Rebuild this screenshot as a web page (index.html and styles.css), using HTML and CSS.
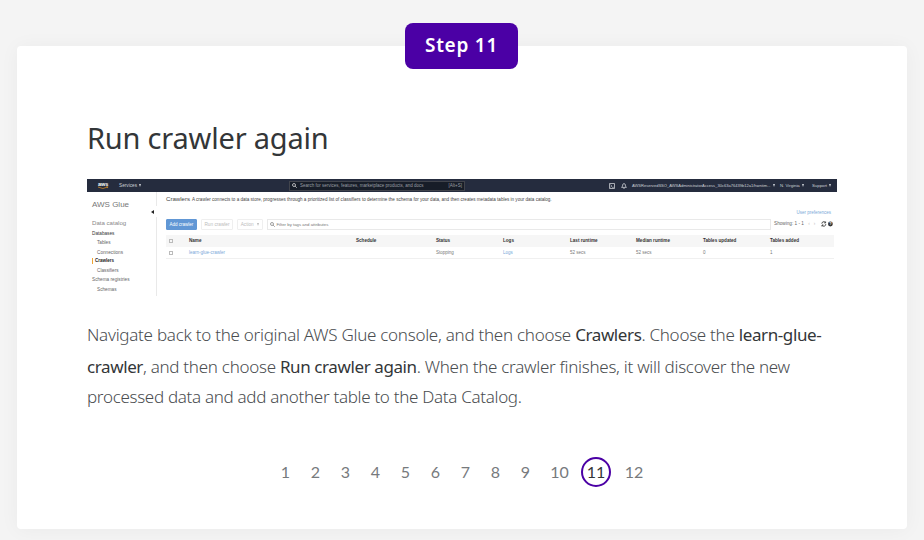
FILE: index.html
```html
<!DOCTYPE html>
<html lang="en">
<head>
<meta charset="utf-8">
<title>Run crawler again</title>
<link rel="stylesheet" href="styles.css">
</head>
<body>
<main class="card">
  <div class="badge">Step 11</div>
  <h1>Run crawler again</h1>
  <section class="console">
    <header class="topbar">
      <svg class="aws" viewBox="0 0 12 9"><text x="1" y="4.8">aws</text><path d="M1 6Q6 9 10.5 6M9.2 5.8h1.6l-.4 1.3"/></svg>
      <span class="services">Services <i class="caret"></i></span>
      <div class="global-search">
        <svg class="lens" viewBox="0 0 10 10"><circle cx="4" cy="4" r="3"/><path d="M6.2 6.2L9.5 9.5"/></svg>
        <span>Search for services, features, marketplace products, and docs</span>
        <span class="key">[Alt+S]</span>
      </div>
      <svg class="shell" viewBox="0 0 6 6"><path d="M.5.5h5v5h-5zM1.5 1.8L2.8 3 1.5 4.2M3.2 4.3h1.5"/></svg>
      <svg class="bell" viewBox="0 0 6 6"><path d="M.6 4.4h4.8L4.4 3V2Q4.2.6 3 .6T1.6 2v1zM2.3 5.3h1.4"/></svg>
      <span class="account">AWSReservedSSO_AWSAdministratorAccess_30c63a76439b12a1/hwntim... <i class="caret"></i></span>
      <span class="region">N. Virginia <i class="caret"></i></span>
      <span class="support">Support <i class="caret"></i></span>
    </header>
    <div class="console-body">
      <nav class="side">
        <div class="product">AWS Glue</div>
        <div class="group">Data catalog</div>
        <div class="item dark">Databases</div>
        <div class="item sub">Tables</div>
        <div class="item sub">Connections</div>
        <div class="item active">Crawlers</div>
        <div class="item sub">Classifiers</div>
        <div class="item">Schema registries</div>
        <div class="item sub">Schemas</div>
        <span class="collapse"></span>
      </nav>
      <div class="main">
        <div class="intro"><span class="title">Crawlers</span><span class="desc">A crawler connects to a data store, progresses through a prioritized list of classifiers to determine the schema for your data, and then creates metadata tables in your data catalog.</span></div>
        <div class="prefs">User preferences</div>
        <div class="tools">
          <span class="btn primary">Add crawler</span>
          <span class="btn run">Run crawler</span>
          <span class="btn action">Action &nbsp;<i class="caret"></i></span>
          <div class="filter"><svg class="lens" viewBox="0 0 10 10"><circle cx="4" cy="4" r="3"/><path d="M6.2 6.2L9.5 9.5"/></svg><span>Filter by tags and attributes</span></div>
          <span class="showing">Showing: 1 - 1 <i>‹ &nbsp; ›</i></span>
          <svg class="icons" viewBox="0 0 12 6"><path d="M.8 2.6A2 2 0 0 1 4.3 1.4M4.6.5v1.4H3.2M4.8 3.2A2 2 0 0 1 1.3 4.5M1 5.5V4h1.4"/><circle cx="9.4" cy="3" r="2.4"/><text x="8.3" y="4.4">?</text></svg>
        </div>
        <div class="row head"><span><i class="check"></i></span><span>Name</span><span>Schedule</span><span>Status</span><span>Logs</span><span>Last runtime</span><span>Median runtime</span><span>Tables updated</span><span>Tables added</span></div>
        <div class="row"><span><i class="check"></i></span><span class="link">learn-glue-crawler</span><span></span><span>Stopping</span><span class="link">Logs</span><span>52 secs</span><span>52 secs</span><span>0</span><span>1</span></div>
      </div>
    </div>
  </section>
  <p class="copy">
    <span class="line l1">Navigate back to the original AWS Glue console, and then choose <b>Crawlers</b>. Choose the <b>learn-glue-</b></span>
    <span class="line l2"><b>crawler</b>, and then choose <b>Run crawler again</b>. When the crawler finishes, it will discover the new</span>
    <span class="line l3">processed data and add another table to the Data Catalog.</span>
  </p>
  <nav class="pages"><a>1</a><a>2</a><a>3</a><a>4</a><a>5</a><a>6</a><a>7</a><a>8</a><a>9</a><a class="wide">10</a><a class="wide current">11</a><a class="wide">12</a></nav>
</main>
</body>
</html>
```
FILE: styles.css
```css
* { box-sizing: border-box; }
body { margin: 0; padding: 46px 0 0 17px; height: 540px; overflow: hidden; background: #f4f4f4; font-family: "Noto Sans", sans-serif; color: #333638; }
.card { position: relative; width: 890px; height: 483px; padding: 71px 70px 0; background: #fff; border-radius: 4px; box-shadow: 0 1px 20px rgba(0,0,0,.045); }
.badge { position: absolute; left: 388px; top: -23px; width: 113px; height: 46px; border-radius: 8px; background: #4b00a5; color: #fff; font-size: 19px; font-weight: 600; line-height: 45px; text-align: center; letter-spacing: .75px; }
h1 { margin: 0; height: 62px; line-height: 42px; font-size: 29px; font-weight: 400; letter-spacing: -.2px; white-space: nowrap; }

/* Console illustration */
.console { width: 750px; height: 117px; overflow: hidden; font-family: "Liberation Sans", sans-serif; font-size: 4.7px; line-height: 6px; white-space: nowrap; color: #666; }
.topbar { display: flex; align-items: center; height: 13px; background: #252c3e; color: #ccd0d6; padding-left: 10px; }
.topbar svg { fill: none; stroke: #dfe2e6; stroke-width: .7; flex: none; }
.caret { display: inline-block; width: 0; margin-left: 1px; border: 1.8px solid transparent; border-top: 3px solid currentColor; border-bottom: 0; vertical-align: middle; }
.aws { width: 12px; height: 9px; }
.aws text { font: bold 5.5px "Liberation Sans", sans-serif; fill: #fff; stroke: none; }
.aws path { stroke: #e69524; }
.services { width: 180px; padding-left: 10px; }
.global-search { display: flex; align-items: center; width: 176px; height: 10px; border: 1px solid #41444c; background: #171d28; color: #9b9fa5; padding: 0 2px; font-size: 4.5px; }
.lens { width: 5px; height: 5px; margin-right: 3px; fill: none; stroke: #777; stroke-width: 1.4; flex: none; }
.global-search .lens { stroke: #ddd; stroke-width: 1.5; }
.key { margin-left: auto; }
.shell { width: 6px; height: 6px; margin-left: 144px; }
.bell { width: 6px; height: 6px; margin: 0 5px 0 6px; }
.account { width: 148px; font-size: 4.05px; }
.region { width: 32px; font-size: 4.3px; }
.support { font-size: 4.3px; }
.console-body { display: flex; height: 104px; }
.side { position: relative; width: 70px; border-right: 1px solid #e9e9e9; padding: 8px 0 0 5px; }
.product { font-size: 8px; line-height: 10px; height: 17px; color: #777; }
.group { font-size: 6.1px; line-height: 12px; height: 12px; color: #888; }
.item { height: 9.3px; line-height: 9.3px; color: #666; }
.item.sub { padding-left: 5px; }
.item.dark { color: #333; }
.item.active { color: #222; font-weight: bold; font-size: 4.5px; border-left: 1px solid #efa536; padding-left: 2px; height: 6px; line-height: 6px; margin: 1.5px 0 1.8px; }
.collapse { position: absolute; right: -1px; top: 14px; width: 8px; height: 11px; background: #fff; }
.collapse::after { content: ""; display: block; margin: 3.5px 0 0 2px; width: 0; border: 2px solid transparent; border-right: 3px solid #222; border-left: 0; }
.main { width: 676px; padding-left: 9px; }
.intro { display: flex; height: 17px; padding-top: 4px; color: #444; }
.title { width: 26px; font-size: 6.1px; }
.desc { font-size: 4.57px; line-height: 7px; }
.prefs { height: 10px; padding: 1px 2px 0 0; text-align: right; color: #7aa9d8; font-size: 4.5px; }
.tools { display: flex; height: 16px; }
.btn { height: 11px; line-height: 10px; text-align: center; border: 1px solid #efefef; border-radius: 1px; color: #bbb; margin-right: 4px; }
.primary { width: 31px; border-color: #6197d5; background: #6197d5; color: #fff; font-size: 4.5px; }
.run { width: 32px; }
.action { width: 26px; }
.filter { display: flex; align-items: center; width: 504px; height: 11px; padding-left: 2px; border: 1px solid #e9e9e9; color: #777; margin-right: 3px; font-size: 4.3px; }
.filter .lens { margin-right: 1.5px; }
.showing { width: 47px; line-height: 10px; font-size: 4.7px; }
.showing i { font-style: normal; color: #bbb; margin-left: 3px; }
.icons { width: 12px; height: 6px; margin-top: 2px; fill: none; stroke: #333; stroke-width: .9; }
.icons circle { fill: #333; stroke: none; }
.icons text { fill: #fff; stroke: none; font: bold 4px "Liberation Sans", sans-serif; }
.row { display: grid; grid-template-columns: 23px 167px 80px 67px 67px 66px 67px 67px 64px; width: 668px; height: 12px; align-items: center; border-bottom: 1px solid #f0f0f0; color: #777; font-size: 4.5px; }
.row.head { border-bottom: 0; background: #f6f6f6; color: #333; font-weight: bold; font-size: 4.6px; }
.row .link { color: #79a8d8; }
.check { display: block; width: 4px; height: 4px; margin-left: 3px; border: 1px solid #bbb; }

.copy { margin: 23px 0 0; font-family: "Noto Sans", sans-serif; font-size: 17px; font-weight: 300; color: #4a4d50; }
.copy b { font-weight: 450; color: #333638; letter-spacing: -.4px; }
.line { display: block; height: 31px; line-height: 31px; white-space: nowrap; }
.l1 { letter-spacing: -.27px; }
.l2 { height: 31px; line-height: 33px; letter-spacing: -.28px; }
.l3 { letter-spacing: -.31px; }
.pages { display: flex; margin: 45px 0 0 183.5px; font-family: Lato, sans-serif; font-size: 16px; color: #777a7d; }
.pages a { width: 30px; height: 30px; line-height: 29px; text-align: center; }
.pages .wide { margin-left: 4px; }
.pages .wide + .wide { margin-left: 8px; }
.pages .wide.current { border: 2px solid #4b00a5; border-radius: 50%; line-height: 25px; color: #333638; margin-left: 6.5px; }
```
